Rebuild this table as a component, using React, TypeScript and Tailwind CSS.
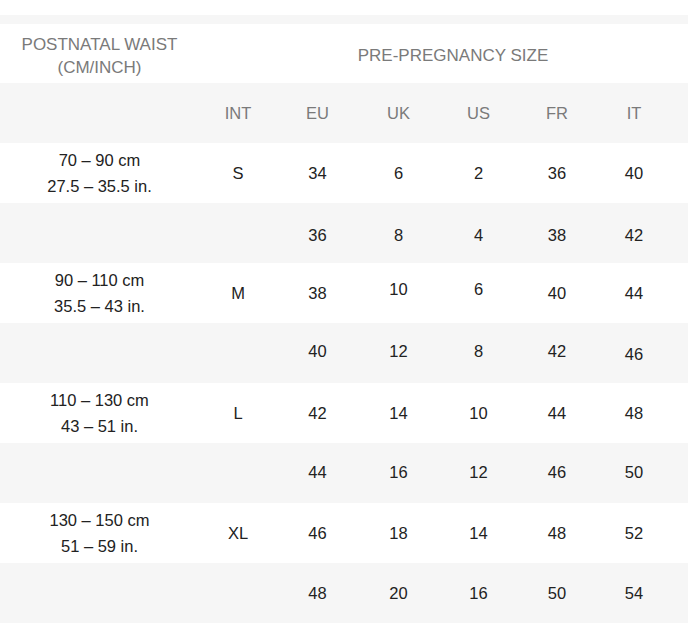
import React from "react";

type Row = {
  waist?: [string, string];
  int?: string;
  sizes: string[];
  // small per-cell nudges, the source table isn't perfectly aligned
  nudge?: string[];
};

const rows: Row[] = [
  { waist: ["70 – 90 cm", "27.5 – 35.5 in."], int: "S", sizes: ["34", "6", "2", "36", "40"] },
  { sizes: ["36", "8", "4", "38", "42"], nudge: ["pt-[5px]", "pt-[5px]", "pt-[5px]", "pt-[5px]", "pt-[5px]"] },
  { waist: ["90 – 110 cm", "35.5 – 43 in."], int: "M", sizes: ["38", "10", "6", "40", "44"], nudge: ["", "pb-[7px]", "pb-[7px]", "", ""] },
  { sizes: ["40", "12", "8", "42", "46"], nudge: ["pb-[4px]", "pb-[4px]", "pb-[4px]", "pb-[4px]", "pt-[3px]"] },
  { waist: ["110 – 130 cm", "43 – 51 in."], int: "L", sizes: ["42", "14", "10", "44", "48"] },
  { sizes: ["44", "16", "12", "46", "50"], nudge: ["pb-[1px]", "pb-[1px]", "pb-[1px]", "pb-[1px]", "pb-[1px]"] },
  { waist: ["130 – 150 cm", "51 – 59 in."], int: "XL", sizes: ["46", "18", "14", "48", "52"] },
  { sizes: ["48", "20", "16", "50", "54"] },
];

const cols = "grid grid-cols-[199px_78px_81px_81px_79px_78px_76px]";

const App: React.FC = () => {
  return (
    <div
      className="min-h-[640px] w-full bg-white"
      style={{ fontFamily: '"Liberation Sans", Arial, sans-serif' }}
    >
      <div className="h-[15px]" />
      <div className="h-[9px] bg-[#f6f6f6]" />

      {/* top header */}
      <div className={`${cols} h-[59px] items-center text-[17px] text-[#7a7a7a]`}>
        <div className="pt-[4px] text-center leading-[23px]">
          POSTNATAL WAIST
          <br />
          (CM/INCH)
        </div>
        <div className="col-span-6 pt-[4px] pl-[35px] text-center leading-[23px]">
          PRE-PREGNANCY SIZE
        </div>
      </div>

      {/* column labels */}
      <div className="bg-[#f6f6f6]">
        <div className={`${cols} h-[60px] items-center text-[16.5px] text-[#7a7a7a]`}>
          <div />
          {["INT", "EU", "UK", "US", "FR", "IT"].map((h) => (
            <div key={h} className="text-center">
              {h}
            </div>
          ))}
        </div>
      </div>

      {rows.map((r, i) => (
        <div key={i} className={i % 2 === 1 ? "bg-[#f6f6f6]" : "bg-white"}>
          <div className={`${cols} h-[60px] items-center text-[16.5px] text-[#222222]`}>
            <div className="text-center leading-[26px]">
              {r.waist && (
                <>
                  {r.waist[0]}
                  <br />
                  {r.waist[1]}
                </>
              )}
            </div>
            <div className="text-center">{r.int ?? ""}</div>
            {r.sizes.map((s, j) => (
              <div key={j} className={`text-center ${r.nudge?.[j] ?? ""}`}>
                {s}
              </div>
            ))}
          </div>
        </div>
      ))}
    </div>
  );
};

export default App;
